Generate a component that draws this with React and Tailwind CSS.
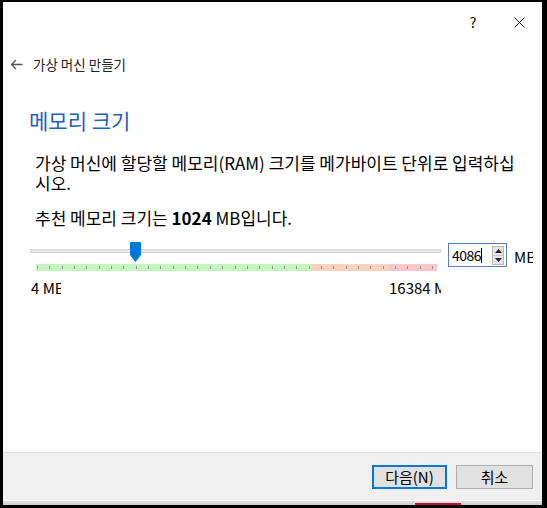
export default function App() {
  const ticks = Array.from({ length: 33 });
  return (
    <div className="w-[547px] h-[508px] bg-black pt-[2px] pl-[3px] pr-[5px] pb-[3px] flex font-['Noto_Sans_CJK_KR','Noto_Sans',sans-serif]">
      <div className="flex-1 flex flex-col bg-white overflow-hidden">
        {/* title bar */}
        <div className="h-[40px] flex justify-end shrink-0">
          <div className="w-[46px] flex items-center justify-center text-[14px] text-black">?</div>
          <div className="w-[46px] flex items-center justify-center">
            <svg width="11" height="11" viewBox="0 0 11 11">
              <path d="M0.5 0.5 L10.5 10.5 M10.5 0.5 L0.5 10.5" stroke="#111" strokeWidth="1" fill="none" />
            </svg>
          </div>
        </div>
        {/* back row */}
        <div className="mt-[13px] flex items-center h-[18px] pl-[7px] gap-[10px] shrink-0">
          <svg width="13" height="11" viewBox="0 0 13 11">
            <path d="M12.5 5.5 H1.5 M6 1 L1.5 5.5 L6 10" stroke="#555" strokeWidth="1.3" fill="none" />
          </svg>
          <span className="text-[13.5px] leading-[18px] text-[#222]">가상 머신 만들기</span>
        </div>
        {/* title */}
        <div className="mt-[33px] pl-[26px] text-[21px] leading-[28px] text-[#1f5fbf] shrink-0">메모리 크기</div>
        {/* text */}
        <div className="mt-[19px] pl-[32px] text-[17px] text-black shrink-0 whitespace-nowrap">
          <p className="leading-[20px]">
            가상 머신에 할당할 메모리(RAM) 크기를 메가바이트 단위로 입력하십
          </p>
          <p className="leading-[20px]">시오.</p>
          <p className="mt-[15px] leading-[20px]">
            추천 메모리 크기는 <b className="font-bold">1024</b> MB입니다.
          </p>
        </div>
        {/* slider row */}
        <div className="mt-[14px] pl-[27px] flex items-start shrink-0">
          <div className="w-[411px] flex flex-col">
            <div className="relative h-[20px]">
              <div className="absolute left-0 right-0 top-[7px] h-[4px] bg-[#e7e7e7] border border-[#d6d6d6]" />
              <svg className="absolute left-[100px] top-0" width="11" height="20" viewBox="0 0 11 20">
                <path d="M0 1 Q0 0 1 0 H10 Q11 0 11 1 V13 L5.5 20 L0 13 Z" fill="#0078d7" />
              </svg>
            </div>
            <div className="relative mt-[2px] ml-[6px] w-[401px] h-[7px] flex">
              <div className="w-[275px] bg-[#c6f6c0]" />
              <div className="w-[78px] bg-[#fdd3c0]" />
              <div className="w-[48px] bg-[#fcc6cb]" />
              <div className="absolute inset-0 flex justify-between items-center pl-[1px] pr-[4px]">
                {ticks.map((_, i) => (
                  <div key={i} className="w-[1px] h-[3px] bg-[#8f8f8f]" />
                ))}
              </div>
            </div>
            <div className="mt-[8px] flex justify-between text-[15px] leading-[18px] text-black">
              <div className="w-[30px] ml-[1px] overflow-hidden whitespace-nowrap">4 MB</div>
              <div className="w-[52px] overflow-hidden whitespace-nowrap">16384 MB</div>
            </div>
          </div>
          <div className="ml-[7px] mt-[1px] w-[59px] h-[24px] border border-[#5a7fb5] bg-white flex items-center">
            <div className="flex-1 flex items-center pl-[3px] text-[14px] tracking-[-0.5px] text-black leading-[16px]">
              <span>4086</span>
              <span className="w-[1px] h-[15px] bg-black" />
            </div>
            <div className="w-[12px] h-[19px] mr-[2px] flex flex-col border border-[#b9b9b9] bg-[#e6e6e6]">
              <div className="flex-1 flex items-center justify-center border-b border-[#c9c9c9]">
                <svg width="7" height="4" viewBox="0 0 7 4"><path d="M0 4 L3.5 0 L7 4 Z" fill="#222" /></svg>
              </div>
              <div className="flex-1 flex items-center justify-center">
                <svg width="7" height="4" viewBox="0 0 7 4"><path d="M0 0 L3.5 4 L7 0 Z" fill="#222" /></svg>
              </div>
            </div>
          </div>
          <div className="ml-[7px] mt-[6px] w-[19px] overflow-hidden whitespace-nowrap text-[15px] leading-[18px] text-black">MB</div>
        </div>
        <div className="flex-1" />
        {/* footer */}
        <div className="h-[48px] shrink-0 border-t border-[#dfdfdf] bg-[#f0f0f0] flex justify-end items-start pt-[12px] pr-[9px] gap-[9px]">
          <button className="w-[75px] h-[24px] border-2 border-[#0078d7] bg-[#e1e1e1] text-[15px] leading-[18px] text-black flex items-center justify-center">
            다음(N)
          </button>
          <button className="w-[77px] h-[24px] border border-[#adadad] bg-[#e1e1e1] text-[15px] leading-[18px] text-black flex items-center justify-center">
            취소
          </button>
        </div>
        <div className="h-[5px] shrink-0 flex flex-col">
          <div className="h-[1px] bg-[#fbfbfb]" />
          <div className="h-[2px] bg-[#dedede]" />
          <div className="h-[2px] bg-[#d2d2d2] flex">
            <div className="w-[412px]" />
            <div className="w-[46px] bg-[#c8102e]" />
          </div>
        </div>
      </div>
    </div>
  );
}
